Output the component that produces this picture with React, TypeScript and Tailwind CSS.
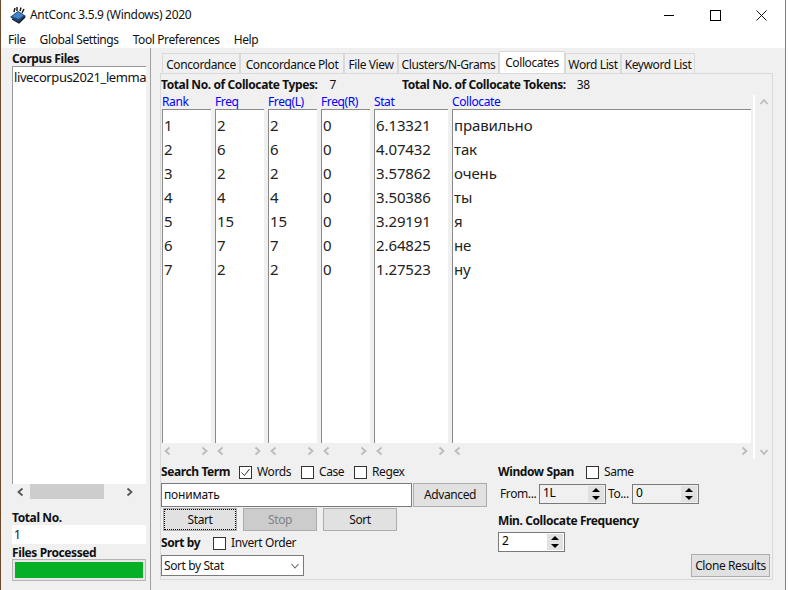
const font = "font-['Noto_Sans','Open_Sans',sans-serif]";

const columns = [
  { title: "Rank", width: "w-[50px]", values: ["1", "2", "3", "4", "5", "6", "7"] },
  { title: "Freq", width: "w-[50px]", values: ["2", "6", "2", "4", "15", "7", "2"] },
  { title: "Freq(L)", width: "w-[50px]", values: ["2", "6", "2", "4", "15", "7", "2"] },
  { title: "Freq(R)", width: "w-[50px]", values: ["0", "0", "0", "0", "0", "0", "0"] },
  { title: "Stat", width: "w-[75px]", values: ["6.13321", "4.07432", "3.57862", "3.50386", "3.29191", "2.64825", "1.27523"] },
  { title: "Collocate", width: "w-[300px]", values: ["правильно", "так", "очень", "ты", "я", "не", "ну"] }
];

const tabs = [
  { label: "Concordance", width: "w-[78px]" },
  { label: "Concordance Plot", width: "w-[104px]" },
  { label: "File View", width: "w-[54px]" },
  { label: "Clusters/N-Grams", width: "w-[101px]" },
  { label: "Collocates", width: "w-[66px]" },
  { label: "Word List", width: "w-[56px]" },
  { label: "Keyword List", width: "w-[74px]" }
];

function Chevron({ dir, color = "#a0a0a0", weight = 1.8 }: { dir: "left" | "right" | "up" | "down"; color?: string; weight?: number }) {
  const points = {
    left: "6.5,1.5 2.5,5 6.5,8.5",
    right: "3.5,1.5 7.5,5 3.5,8.5",
    up: "1.5,7 5,3 8.5,7",
    down: "1.5,3 5,7 8.5,3"
  }[dir];
  return (
    <svg width="10" height="10" viewBox="0 0 10 10" className="shrink-0">
      <polyline points={points} fill="none" stroke={color} strokeWidth={weight} />
    </svg>
  );
}

function CheckBox({ checked }: { checked?: boolean }) {
  return (
    <div className="flex h-[13px] w-[13px] shrink-0 items-center justify-center border border-[#333] bg-white">
      {checked && (
        <svg width="11" height="11" viewBox="0 0 11 11">
          <polyline points="1.5,5.5 4.5,8.5 9.5,2" fill="none" stroke="#333" strokeWidth="1" />
        </svg>
      )}
    </div>
  );
}

function Spinner({ value, white }: { value: string; white?: boolean }) {
  return (
    <div className={`flex h-5 w-[67px] shrink-0 items-stretch border border-[#7a7a7a] ${white ? "bg-white" : "bg-[#f0f0f0]"}`}>
      <span className="flex-1 pl-[3px] text-[12px] leading-[16px] text-black">{value}</span>
      <div className="my-px mr-px flex w-4 flex-col justify-between bg-white">
        <div className="flex h-[8px] items-center justify-center bg-[#e1e1e1]">
          <div className="h-0 w-0 border-x-[4px] border-b-[4px] border-x-transparent border-b-black" />
        </div>
        <div className="flex h-[8px] items-center justify-center bg-[#e1e1e1]">
          <div className="h-0 w-0 border-x-[4px] border-t-[4px] border-x-transparent border-t-black" />
        </div>
      </div>
    </div>
  );
}

function Button({ label, width, focused, disabled }: { label: string; width: string; focused?: boolean; disabled?: boolean }) {
  return (
    <div className={`flex h-[23px] items-center justify-center border border-[#adadad] ${width} ${disabled ? "bg-[#cccccc] text-[#838383]" : "bg-[#e1e1e1]"}`}>
      {focused ? (
        <div className="flex h-full w-full items-center justify-center border border-dotted border-black">{label}</div>
      ) : (
        label
      )}
    </div>
  );
}

export default function App() {
  return (
    <div className="h-[590px] w-[788px] overflow-hidden bg-white pr-[2px]">
      <div className={`${font} flex h-[590px] w-[786px] flex-col overflow-hidden border-x border-l-[#6b4a2a] border-r-[#8a8078] bg-[#f0f0f0] text-[12px] tracking-[-0.4px] text-[#111]`}>
        <div className="flex h-[48px] shrink-0 flex-col bg-white">
          <div className="flex h-[30px] items-center">
            <svg width="18" height="18" viewBox="0 0 18 18" className="ml-[8px] mr-[3px] shrink-0">
              <path d="M1 11 L9 5 L17 10 L10 17 Z" fill="#23466f" />
              <path d="M3 10.5 L9 6 L14.5 9.5 L9.5 13 Z" fill="#3f86cf" />
              <path d="M5 6 L6 2 M8 5 L8 1 M11 5 L12 1.5 M13 7 L15 3" stroke="#111" strokeWidth="1.4" />
              <path d="M3 13 L10 17 L16 11" fill="none" stroke="#111" strokeWidth="1.2" />
            </svg>
            <span className="tracking-[-0.3px]">AntConc 3.5.9 (Windows) 2020</span>
            <div className="ml-auto flex items-center pr-[1px]">
              <div className="flex h-[30px] w-[46px] items-center justify-center">
                <div className="h-px w-[10px] bg-black" />
              </div>
              <div className="flex h-[30px] w-[46px] items-center justify-center">
                <div className="h-[11px] w-[11px] border border-black" />
              </div>
              <div className="flex h-[30px] w-[46px] items-center justify-center">
                <svg width="11" height="11" viewBox="0 0 11 11">
                  <path d="M0.5 0.5 L10.5 10.5 M10.5 0.5 L0.5 10.5" stroke="#111" strokeWidth="1" />
                </svg>
              </div>
            </div>
          </div>
          <div className="flex h-[18px] gap-[14px] pl-[7px] leading-[19px]">
            <span>File</span>
            <span>Global Settings</span>
            <span>Tool Preferences</span>
            <span>Help</span>
          </div>
        </div>

        <div className="flex min-h-0 flex-1">
          <div className="flex w-[150px] shrink-0 flex-col border-r border-r-[#a0a0a0] pl-[11px] pr-[4px]">
            <div className="mt-[3px] h-[15px] font-bold leading-[16px]">Corpus Files</div>
            <div className="h-[418px] overflow-hidden whitespace-nowrap border-l border-t border-l-[#9a9a9a] border-t-[#9a9a9a] bg-white pl-[1px] pt-[1px] text-[13px]">
              livecorpus2021_lemma
            </div>
            <div className="flex h-[15px] items-center bg-[#f0f0f0]">
              <div className="flex w-[17px] justify-center"><Chevron dir="left" color="#555" /></div>
              <div className="ml-px h-full w-[74px] bg-[#cdcdcd]" />
              <div className="flex flex-1 justify-center pl-[8px]"><Chevron dir="right" color="#555" /></div>
            </div>
            <div className="mt-[12px] h-[14px] font-bold leading-[14px]">Total No.</div>
            <div className="h-[19px] bg-white pl-[2px] leading-[19px]">1</div>
            <div className="mt-px h-[14px] font-bold leading-[16px]">Files Processed</div>
            <div className="h-[22px] border border-[#b5b5b5] bg-[#e6e6e6] p-[2px]">
              <div className="h-full bg-[#06b025]" />
            </div>
          </div>

          <div className="min-w-0 flex-1 pl-[9px] pt-[5px]">
            <div className="flex h-[20px] items-end pl-[2px]">
              {tabs.map((tab) =>
                tab.label === "Collocates" ? (
                  <div key={tab.label} className={`z-10 flex h-[22px] shrink-0 items-center justify-center border border-b-0 border-[#d9d9d9] bg-white ${tab.width}`}>
                    {tab.label}
                  </div>
                ) : (
                  <div key={tab.label} className={`flex h-[20px] shrink-0 items-center justify-center border border-b-0 border-[#d9d9d9] pt-[2px] ${tab.width}`}>
                    {tab.label}
                  </div>
                )
              )}
            </div>
            <div className="h-[507px] w-[613px] border border-[#d9d9d9] bg-[#f0f0f0]">
              <div className="flex h-[21px] items-center font-bold">
                <span>Total No. of Collocate Types:</span>
                <span className="ml-[12px] font-normal">7</span>
                <span className="ml-[66px]">Total No. of Collocate Tokens:</span>
                <span className="ml-[11px] font-normal">38</span>
              </div>

              <div className="flex h-[364px]">
                <div className="flex w-[592px] shrink-0 gap-[3px]">
                  {columns.map((col) => (
                    <div key={col.title} className={`flex shrink-0 flex-col ${col.width}`}>
                      <div className="h-[14px] pl-px leading-[14px] text-[#0000ff]">{col.title}</div>
                      <div className="ml-px flex-1 border-l border-t border-l-[#8a8a8a] border-t-[#8a8a8a] bg-white pl-[1px] pt-[3px] text-[15px] tracking-[-0.1px] text-[#222]">
                        {col.values.map((value, i) => (
                          <div key={i} className="h-[24px] leading-[24px]">{value}</div>
                        ))}
                      </div>
                      <div className="flex h-[16px] items-center justify-between bg-[#f0f0f0] px-[2px]">
                        <Chevron dir="left" color="#bbb" />
                        <Chevron dir="right" color="#bbb" />
                      </div>
                    </div>
                  ))}
                </div>
                <div className="flex h-[364px] flex-1 flex-col items-center justify-between border-l-2 border-l-white pb-[2px] pt-[2px]">
                  <Chevron dir="up" color="#bbb" />
                  <Chevron dir="down" color="#bbb" />
                </div>
              </div>

              <div className="flex pt-[5px]">
                <div className="w-[326px] shrink-0">
                  <div className="flex h-[16px] items-center leading-[16px]">
                    <span className="w-[78px] font-bold">Search Term</span>
                    <CheckBox checked />
                    <span className="ml-[5px] w-[44px]">Words</span>
                    <CheckBox />
                    <span className="ml-[5px] w-[35px]">Case</span>
                    <CheckBox />
                    <span className="ml-[5px]">Regex</span>
                  </div>
                  <div className="mt-[3px] flex h-[24px] gap-px">
                    <div className="w-[251px] border border-[#7a7a7a] bg-white pl-[2px] leading-[21px] tracking-[-0.2px]">понимать</div>
                    <div className="flex w-[74px] items-center justify-center border border-[#adadad] bg-[#e1e1e1]">Advanced</div>
                  </div>
                  <div className="mt-px flex gap-[6px] pl-[2px]">
                    <Button label="Start" width="w-[74px]" focused />
                    <Button label="Stop" width="w-[74px]" disabled />
                    <Button label="Sort" width="w-[74px]" />
                  </div>
                  <div className="mt-[4px] flex h-[16px] items-center">
                    <span className="w-[52px] font-bold">Sort by</span>
                    <CheckBox />
                    <span className="ml-[5px]">Invert Order</span>
                  </div>
                  <div className="mt-[4px] flex h-[21px] w-[143px] items-center justify-between border border-[#7a7a7a] bg-white pl-[2px] pr-[3px]">
                    <span>Sort by Stat</span>
                    <Chevron dir="down" color="#666" weight={1.1} />
                  </div>
                </div>

                <div className="ml-[11px] flex-1 pr-[2px]">
                  <div className="flex h-[16px] items-center">
                    <span className="w-[88px] font-bold">Window Span</span>
                    <CheckBox />
                    <span className="ml-[5px]">Same</span>
                  </div>
                  <div className="mt-[4px] flex items-center pl-[2px]">
                    <span className="w-[39px]">From...</span>
                    <Spinner value="1L" />
                    <span className="ml-[2px] w-[24px]">To...</span>
                    <Spinner value="0" />
                  </div>
                  <div className="mt-[9px] h-[16px] font-bold leading-[16px]">Min. Collocate Frequency</div>
                  <div className="mt-[3px]">
                    <Spinner value="2" white />
                  </div>
                  <div className="flex justify-end">
                    <div className="mt-[2px] flex h-[23px] w-[79px] items-center justify-center border border-[#adadad] bg-[#e1e1e1]">
                      Clone Results
                    </div>
                  </div>
                </div>
              </div>
            </div>
          </div>
        </div>
      </div>
    </div>
  );
}
